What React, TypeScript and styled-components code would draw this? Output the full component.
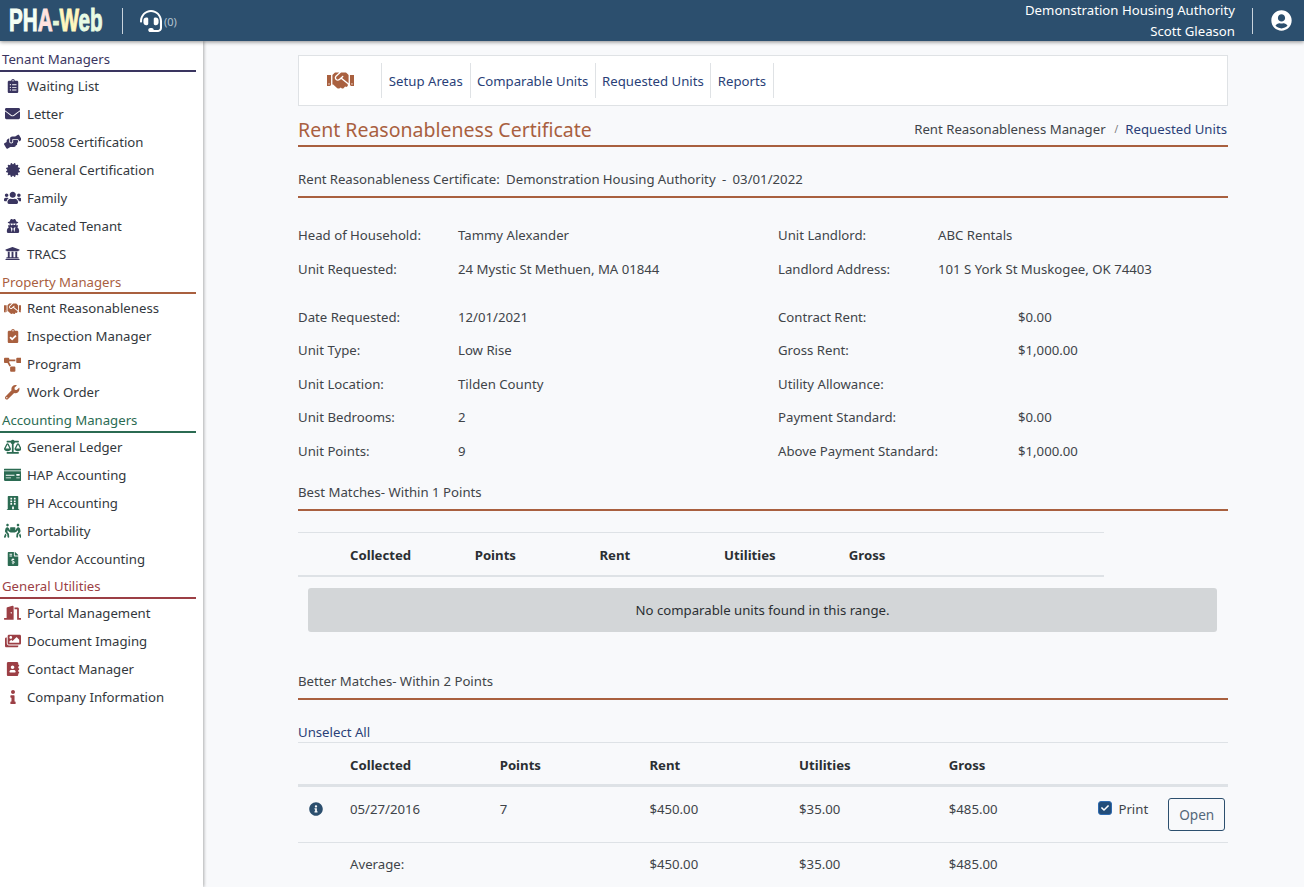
import styled, { createGlobalStyle } from "styled-components";
import type { IconType } from "react-icons";
import {
  FaAddressBook,
  FaBalanceScale,
  FaBuilding,
  FaCertificate,
  FaCheck,
  FaClipboardCheck,
  FaClipboardList,
  FaDoorOpen,
  FaEnvelope,
  FaFileInvoiceDollar,
  FaHandsHelping,
  FaHandshake,
  FaHeadset,
  FaImages,
  FaInfo,
  FaInfoCircle,
  FaMoneyCheck,
  FaPeopleCarry,
  FaProjectDiagram,
  FaUniversity,
  FaUserCircle,
  FaUserSecret,
  FaUsers,
  FaWrench,
} from "react-icons/fa";

const GlobalStyle = createGlobalStyle`
  html, body {
    margin: 0;
    padding: 0;
    height: 100%;
    overflow: hidden;
  }
  body {
    background: #f8f9fb;
    font-family: "Noto Sans", "Open Sans", sans-serif;
    font-size: 13.2px;
    color: #404449;
  }
`;

/* layout */
const Page = styled.div`
  width: 1304px;
  height: 887px;
  display: flex;
  flex-direction: column;
  overflow: hidden;
`;

const Body = styled.div`
  flex: 1;
  display: flex;
  min-height: 0;
`;

/* top bar */
const TopBar = styled.header`
  height: 41px;
  flex: none;
  background: #2c4f6e;
  box-shadow: 0 1px 4px rgba(0, 0, 0, 0.45);
  display: flex;
  align-items: center;
  justify-content: space-between;
  position: relative;
  z-index: 2;
`;

const TopLeft = styled.div`
  display: flex;
  align-items: center;
`;

const LogoBox = styled.div`
  width: 122px;
  padding-left: 9px;
  box-sizing: border-box;
`;

const Logo = styled.div`
  display: inline-block;
  white-space: nowrap;
  transform: scaleX(0.645);
  transform-origin: left center;
  font-family: "Liberation Sans", sans-serif;
  font-weight: 700;
  font-size: 32px;
  line-height: 41px;
`;

const LogoPart = styled.span<{ $color: string }>`
  color: ${(p) => p.$color};
  -webkit-text-stroke: 1px ${(p) => p.$color};
`;

const TopDivider = styled.span`
  width: 1px;
  height: 26px;
  background: #c9d3dc;
`;

const Support = styled.div`
  display: flex;
  align-items: center;
  gap: 2px;
  margin-left: 17px;
  color: #ffffff;
  font-size: 22px;

  span {
    font-size: 11px;
    color: #b5c2ce;
    margin-top: 2px;
  }
`;

const TopRight = styled.div`
  display: flex;
  align-items: center;
`;

const Account = styled.div`
  text-align: right;
  color: #ffffff;
  font-size: 13.2px;
  line-height: 21px;
  padding-right: 17px;
`;

const UserIcon = styled.span`
  display: flex;
  color: #ffffff;
  font-size: 21px;
  padding: 0 12px 0 18px;
`;

/* side menu */
const Sidebar = styled.nav`
  width: 203px;
  flex: none;
  background: #ffffff;
  box-shadow: 1px 0 3px rgba(0, 0, 0, 0.3);
  padding-top: 4.67px;
  box-sizing: border-box;
`;

const GroupTitle = styled.div<{ $color: string }>`
  width: 196px;
  box-sizing: border-box;
  padding: 4.8px 0 0.53px 2px;
  color: ${(p) => p.$color};
  border-bottom: 2px solid ${(p) => p.$color};
  line-height: 19px;
`;

const MenuItem = styled.div`
  height: 28px;
  display: flex;
  align-items: center;
  color: #33383d;
`;

const MenuIcon = styled.span<{ $color: string; $size: number }>`
  width: 27px;
  flex: none;
  display: flex;
  justify-content: center;
  padding-right: 2px;
  box-sizing: border-box;
  color: ${(p) => p.$color};
  font-size: ${(p) => p.$size}px;
`;

/* main column */
const Main = styled.main`
  flex: 1;
  padding: 14px 76px 0 95px;
  min-width: 0;
`;

const Tabs = styled.div`
  height: 51px;
  box-sizing: border-box;
  background: #ffffff;
  border: 1px solid #dfe2e5;
  display: flex;
  align-items: center;
`;

const TabLogo = styled.div`
  width: 82px;
  height: 35px;
  display: flex;
  align-items: center;
  justify-content: center;
  color: #a9603f;
  font-size: 27px;
  border-right: 1px solid #dfe2e5;
`;

const Tab = styled.div<{ $width: number }>`
  height: 35px;
  width: ${(p) => p.$width}px;
  box-sizing: border-box;
  display: flex;
  align-items: center;
  justify-content: center;
  color: #2a3f78;
  border-right: 1px solid #dfe2e5;
`;

const TitleRow = styled.div`
  height: 41px;
  box-sizing: border-box;
  padding-top: 8px;
  border-bottom: 2px solid #a9603f;
  display: flex;
  align-items: center;
  justify-content: space-between;
`;

const PageTitle = styled.h1`
  margin: 0;
  font-size: 19.5px;
  font-weight: 400;
  color: #a9603f;
`;

const Crumbs = styled.div`
  color: #404449;
  display: flex;
  align-items: center;
  margin: 0 1px 2px 0;

  i {
    font-style: normal;
    font-size: 10px;
    color: #777;
    margin: 0 7px 0 9px;
  }
  b {
    font-weight: 400;
    color: #2a3f78;
  }
`;

const SectionHead = styled.div<{ $top: number; $spacing?: number }>`
  margin-top: ${(p) => p.$top}px;
  height: 28.5px;
  box-sizing: border-box;
  border-bottom: 2px solid #a9603f;
  padding-bottom: 7.5px;
  display: flex;
  align-items: center;
  white-space: pre;
  word-spacing: ${(p) => p.$spacing ?? 0}px;
`;

const Details = styled.div`
  display: grid;
  grid-template-columns: 480px 1fr;
  padding-top: 20.55px;
`;

const DetailRow = styled.div<{ $value: number; $gap?: number }>`
  height: 33.5px;
  margin-bottom: ${(p) => p.$gap ?? 0}px;
  display: grid;
  grid-template-columns: ${(p) => p.$value}px 1fr;
  align-items: center;
`;

/* tables */
const Table = styled.div<{ $width?: number; $top?: number }>`
  width: ${(p) => (p.$width ? `${p.$width}px` : "100%")};
  margin-top: ${(p) => p.$top ?? 0}px;
  border-top: 1px solid #dee2e6;
`;

const HeadRow = styled.div<{ $cols: string; $line: number }>`
  display: grid;
  grid-template-columns: ${(p) => p.$cols};
  align-items: center;
  height: 44px;
  box-sizing: border-box;
  padding-top: ${(p) => p.$line}px;
  border-bottom: ${(p) => p.$line}px solid #dee2e6;
`;

const DataRow = styled.div<{ $cols: string }>`
  display: grid;
  grid-template-columns: ${(p) => p.$cols};
  align-items: center;
  height: 56px;
  box-sizing: border-box;
  padding-bottom: 11px;
  border-bottom: 1px solid #dee2e6;
`;

const AverageRow = styled.div<{ $cols: string }>`
  display: grid;
  grid-template-columns: ${(p) => p.$cols};
  align-items: center;
  height: 42px;
`;

const Head = styled.div`
  font-weight: 700;
  color: #2b2f33;
`;

const Alert = styled.div`
  margin: 11px 11px 0 10px;
  height: 44px;
  border-radius: 3px;
  background: #d3d6d8;
  color: #2b2f33;
  display: flex;
  align-items: center;
  justify-content: center;
`;

const UnselectLink = styled.div`
  margin-top: 22px;
  height: 20px;
  line-height: 20px;
  color: #2a3f78;
`;

const InfoMark = styled.span`
  display: flex;
  color: #2c4f6e;
  font-size: 14px;
  padding-left: 10.5px;
`;

const PrintCell = styled.div`
  align-self: stretch;
  display: flex;
  align-items: flex-start;
  justify-content: flex-end;
  padding: 11px 4px 0 0;
`;

const PrintCheck = styled.span`
  width: 14px;
  height: 14px;
  margin-top: 3px;
  border-radius: 3px;
  background: #224d7a;
  border: 1px solid #2f6bb0;
  box-sizing: border-box;
  color: #ffffff;
  font-size: 8px;
  display: flex;
  align-items: center;
  justify-content: center;
`;

const PrintLabel = styled.span`
  margin: 2px 20px 0 6px;
  line-height: 18px;
`;

const OpenButton = styled.button`
  width: 57px;
  height: 33px;
  background: transparent;
  border: 1px solid #2c4f6e;
  border-radius: 3px;
  color: #54677a;
  font: inherit;
  font-size: 13.6px;
  padding: 0;
`;

/* data */
interface MenuEntry {
  label: string;
  icon: IconType;
  size: number;
}

interface MenuGroup {
  title: string;
  color: string;
  items: MenuEntry[];
}

const groups: MenuGroup[] = [
  {
    title: "Tenant Managers",
    color: "#3a3560",
    items: [
      { label: "Waiting List", icon: FaClipboardList, size: 14 },
      { label: "Letter", icon: FaEnvelope, size: 15 },
      { label: "50058 Certification", icon: FaHandsHelping, size: 17.5 },
      { label: "General Certification", icon: FaCertificate, size: 14 },
      { label: "Family", icon: FaUsers, size: 17.5 },
      { label: "Vacated Tenant", icon: FaUserSecret, size: 14 },
      { label: "TRACS", icon: FaUniversity, size: 15 },
    ],
  },
  {
    title: "Property Managers",
    color: "#a9603f",
    items: [
      { label: "Rent Reasonableness", icon: FaHandshake, size: 17.5 },
      { label: "Inspection Manager", icon: FaClipboardCheck, size: 14 },
      { label: "Program", icon: FaProjectDiagram, size: 17.5 },
      { label: "Work Order", icon: FaWrench, size: 14.5 },
    ],
  },
  {
    title: "Accounting Managers",
    color: "#2b6b52",
    items: [
      { label: "General Ledger", icon: FaBalanceScale, size: 17.5 },
      { label: "HAP Accounting", icon: FaMoneyCheck, size: 17.5 },
      { label: "PH Accounting", icon: FaBuilding, size: 14 },
      { label: "Portability", icon: FaPeopleCarry, size: 17.5 },
      { label: "Vendor Accounting", icon: FaFileInvoiceDollar, size: 14 },
    ],
  },
  {
    title: "General Utilities",
    color: "#9c3f45",
    items: [
      { label: "Portal Management", icon: FaDoorOpen, size: 17.5 },
      { label: "Document Imaging", icon: FaImages, size: 16 },
      { label: "Contact Manager", icon: FaAddressBook, size: 14 },
      { label: "Company Information", icon: FaInfo, size: 14 },
    ],
  },
];

const logoParts = [
  { text: "PH", color: "#f4fff4" },
  { text: "A", color: "#ffe3e0" },
  { text: "-", color: "#e4f7d8" },
  { text: "W", color: "#fff6bf" },
  { text: "eb", color: "#e8fbe4" },
];

const tabs = [
  { label: "Setup Areas", width: 88.6 },
  { label: "Comparable Units", width: 125 },
  { label: "Requested Units", width: 115.7 },
  { label: "Reports", width: 62.3 },
];

const leftTop = [
  ["Head of Household:", "Tammy Alexander"],
  ["Unit Requested:", "24 Mystic St Methuen, MA 01844"],
];
const leftBottom = [
  ["Date Requested:", "12/01/2021"],
  ["Unit Type:", "Low Rise"],
  ["Unit Location:", "Tilden County"],
  ["Unit Bedrooms:", "2"],
  ["Unit Points:", "9"],
];
const rightTop = [
  ["Unit Landlord:", "ABC Rentals"],
  ["Landlord Address:", "101 S York St Muskogee, OK 74403"],
];
const rightBottom = [
  ["Contract Rent:", "$0.00"],
  ["Gross Rent:", "$1,000.00"],
  ["Utility Allowance:", ""],
  ["Payment Standard:", "$0.00"],
  ["Above Payment Standard:", "$1,000.00"],
];

const headers = ["Collected", "Points", "Rent", "Utilities", "Gross"];
const bestCols = "52px repeat(5, 124.7px) 1fr";
const betterCols = "52px repeat(5, 149.7px) 1fr";

export default function App() {
  return (
    <Page>
      <GlobalStyle />
      <TopBar>
        <TopLeft>
          <LogoBox>
            <Logo>
              {logoParts.map((part) => (
                <LogoPart key={part.text} $color={part.color}>
                  {part.text}
                </LogoPart>
              ))}
            </Logo>
          </LogoBox>
          <TopDivider />
          <Support>
            <FaHeadset />
            <span>(0)</span>
          </Support>
        </TopLeft>
        <TopRight>
          <Account>
            <div>Demonstration Housing Authority</div>
            <div>Scott Gleason</div>
          </Account>
          <TopDivider />
          <UserIcon>
            <FaUserCircle />
          </UserIcon>
        </TopRight>
      </TopBar>
      <Body>
        <Sidebar>
          {groups.map((group) => (
            <div key={group.title}>
              <GroupTitle $color={group.color}>{group.title}</GroupTitle>
              {group.items.map((item) => (
                <MenuItem key={item.label}>
                  <MenuIcon $color={group.color} $size={item.size}>
                    <item.icon />
                  </MenuIcon>
                  {item.label}
                </MenuItem>
              ))}
            </div>
          ))}
        </Sidebar>
        <Main>
          <Tabs>
            <TabLogo>
              <FaHandshake />
            </TabLogo>
            {tabs.map((tab) => (
              <Tab key={tab.label} $width={tab.width}>
                {tab.label}
              </Tab>
            ))}
          </Tabs>
          <TitleRow>
            <PageTitle>Rent Reasonableness Certificate</PageTitle>
            <Crumbs>
              Rent Reasonableness Manager
              <i>/</i>
              <b>Requested Units</b>
            </Crumbs>
          </TitleRow>
          <SectionHead $top={22.5} $spacing={-0.25}>
            {"Rent Reasonableness Certificate:  Demonstration Housing Authority  -  03/01/2022"}
          </SectionHead>
          <Details>
            <div>
              {leftTop.map(([label, value], i) => (
                <DetailRow key={label} $value={160} $gap={i === 1 ? 14.5 : 0}>
                  <span>{label}</span>
                  <span>{value}</span>
                </DetailRow>
              ))}
              {leftBottom.map(([label, value]) => (
                <DetailRow key={label} $value={160}>
                  <span>{label}</span>
                  <span>{value}</span>
                </DetailRow>
              ))}
            </div>
            <div>
              {rightTop.map(([label, value], i) => (
                <DetailRow key={label} $value={160} $gap={i === 1 ? 14.5 : 0}>
                  <span>{label}</span>
                  <span>{value}</span>
                </DetailRow>
              ))}
              {rightBottom.map(([label, value]) => (
                <DetailRow key={label} $value={240}>
                  <span>{label}</span>
                  <span>{value}</span>
                </DetailRow>
              ))}
            </div>
          </Details>
          <SectionHead $top={14.95}>Best Matches- Within 1 Points</SectionHead>
          <Table $width={806} $top={21}>
            <HeadRow $cols={bestCols} $line={2}>
              <span />
              {headers.map((h) => (
                <Head key={h}>{h}</Head>
              ))}
            </HeadRow>
          </Table>
          <Alert>No comparable units found in this range.</Alert>
          <SectionHead $top={39.5}>Better Matches- Within 2 Points</SectionHead>
          <UnselectLink>Unselect All</UnselectLink>
          <Table>
            <HeadRow $cols={betterCols} $line={3}>
              <span />
              {headers.map((h) => (
                <Head key={h}>{h}</Head>
              ))}
            </HeadRow>
            <DataRow $cols={betterCols}>
              <InfoMark>
                <FaInfoCircle />
              </InfoMark>
              <span>05/27/2016</span>
              <span>7</span>
              <span>$450.00</span>
              <span>$35.00</span>
              <span>$485.00</span>
              <PrintCell>
                <PrintCheck>
                  <FaCheck />
                </PrintCheck>
                <PrintLabel>Print</PrintLabel>
                <OpenButton>Open</OpenButton>
              </PrintCell>
            </DataRow>
            <AverageRow $cols={betterCols}>
              <span />
              <span>Average:</span>
              <span />
              <span>$450.00</span>
              <span>$35.00</span>
              <span>$485.00</span>
            </AverageRow>
          </Table>
        </Main>
      </Body>
    </Page>
  );
}
